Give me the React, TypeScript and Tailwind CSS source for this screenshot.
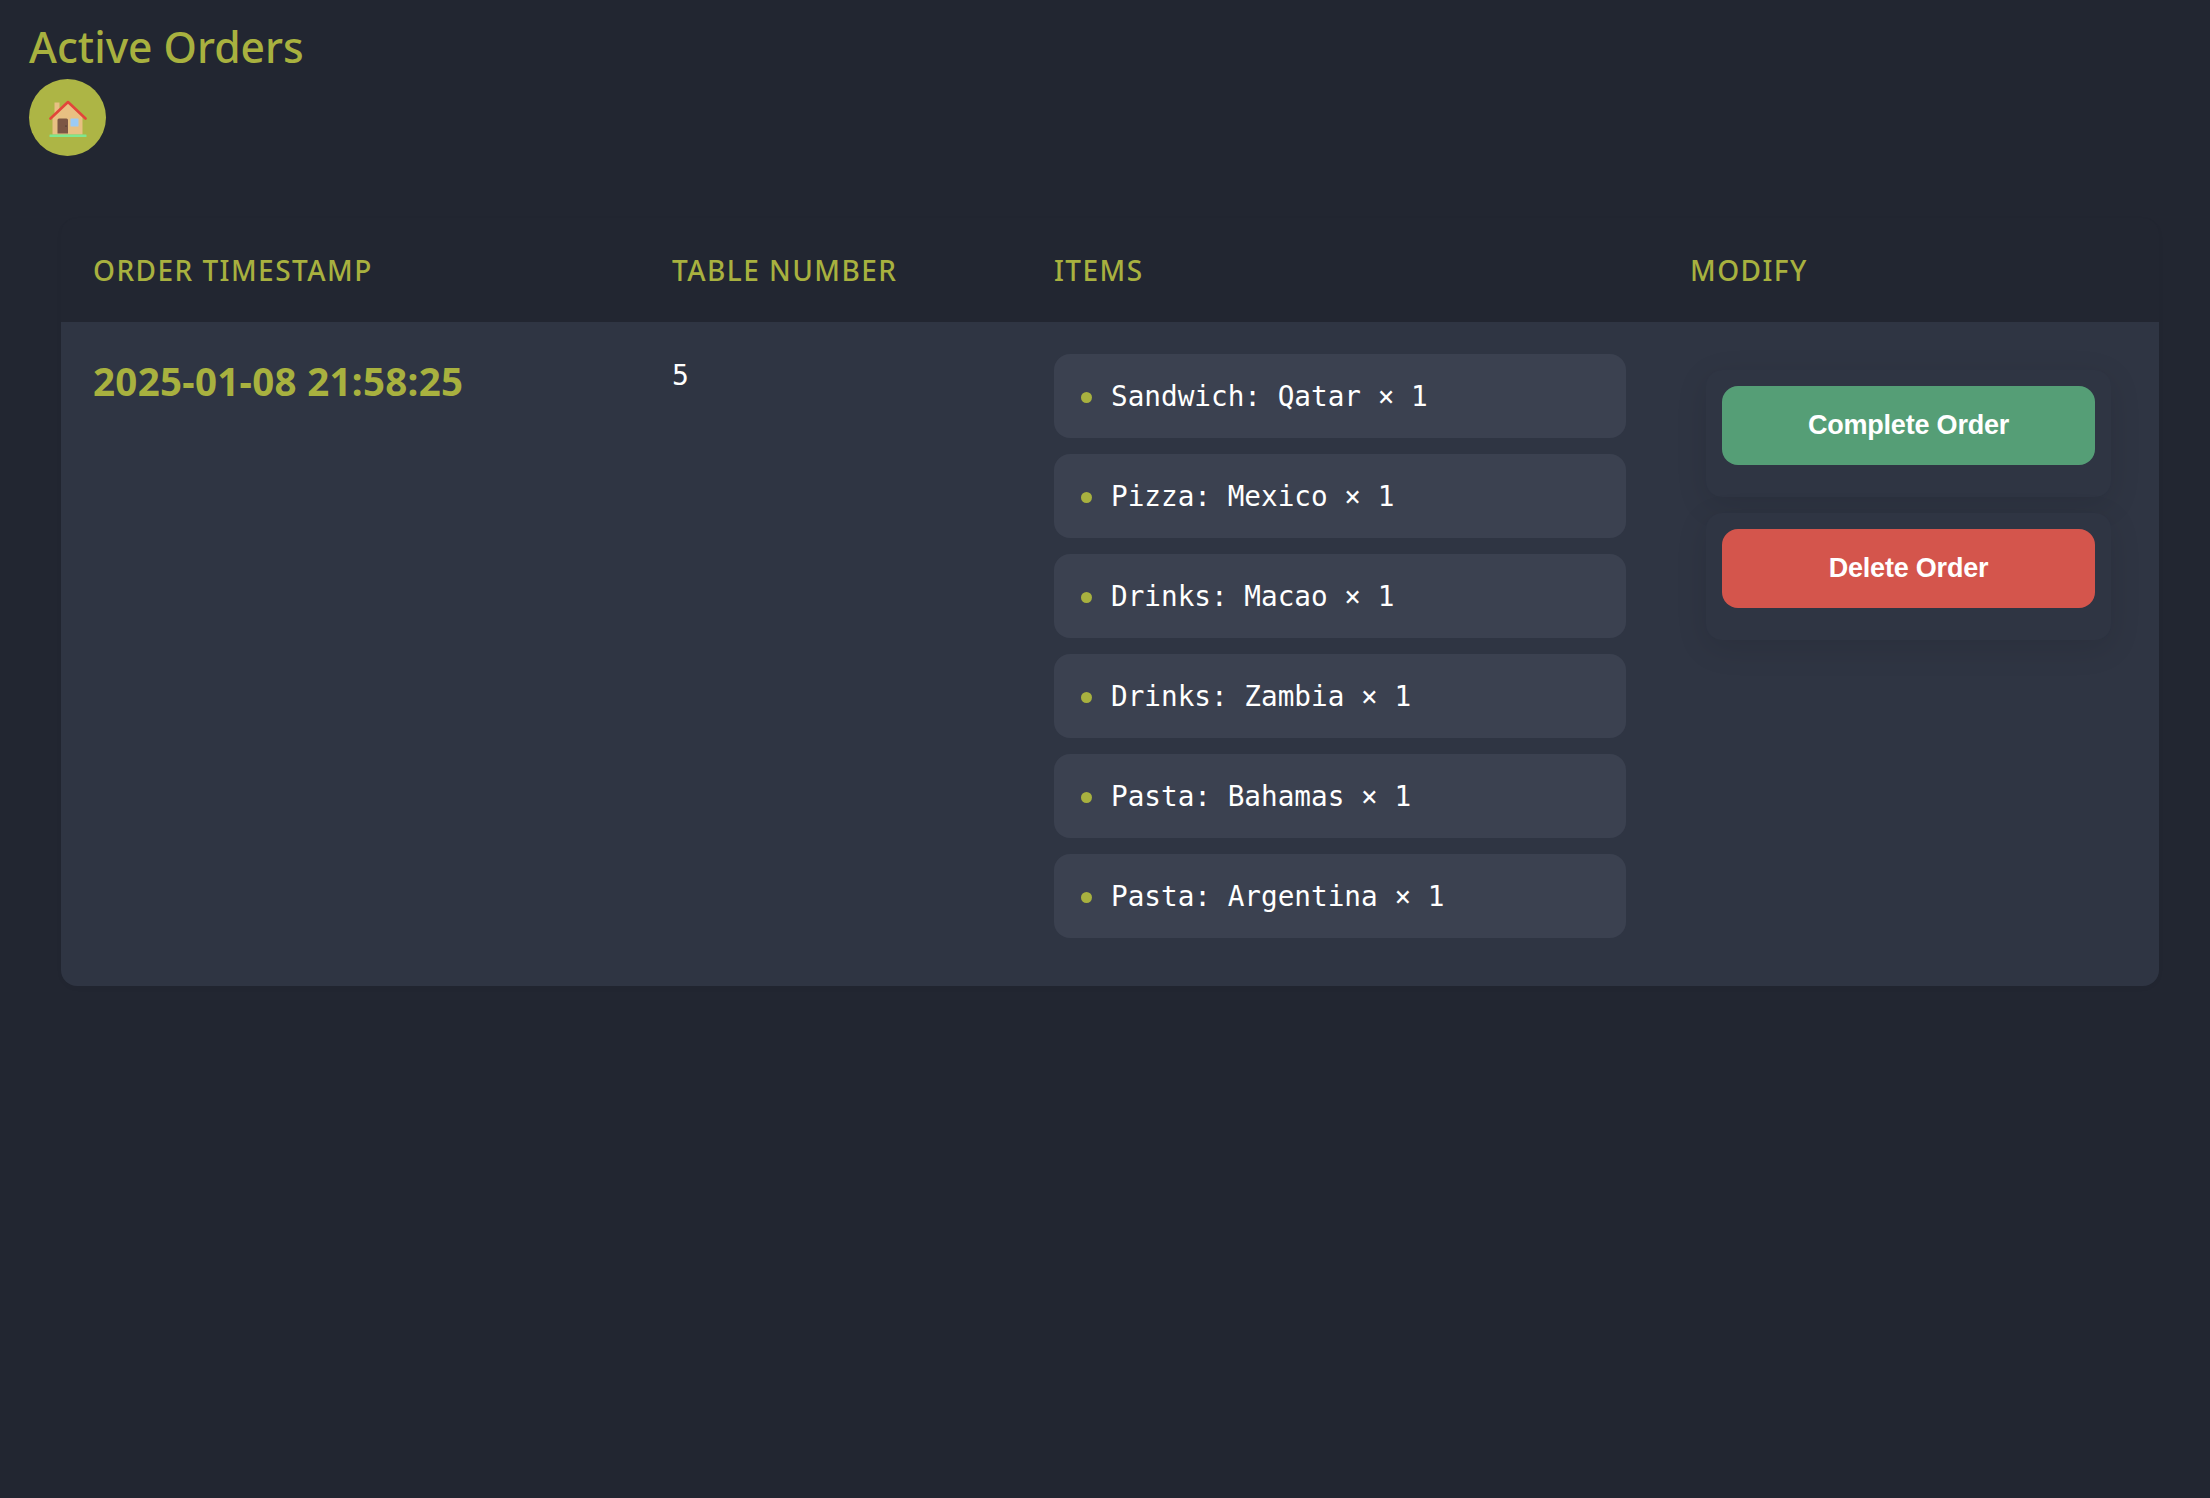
const items = ["Sandwich: Qatar × 1", "Pizza: Mexico × 1", "Drinks: Macao × 1", "Drinks: Zambia × 1", "Pasta: Bahamas × 1", "Pasta: Argentina × 1"];

function House() {
  return (
    <svg width="38" height="40" viewBox="0 0 38 40" aria-hidden="true">
      <rect x="5.5" y="4.5" width="5" height="14" fill="#e8c082" />
      <path d="M3.5 19 L19 4 L33.5 19 V36.5 H3.5 Z" fill="#e8c082" />
      <path d="M1.5 20.5 L19 4 L36.5 20.5" fill="none" stroke="#e2453a" strokeWidth="2.6" strokeLinecap="round" strokeLinejoin="round" />
      <path d="M8.5 22 Q8.5 20.5 10 20.5 H17.5 Q19 20.5 19 22 V35.5 H8.5 Z" fill="#7d5644" />
      <circle cx="17" cy="28" r="0.6" fill="#222" />
      <rect x="21.5" y="20.5" width="8" height="8" rx="0.5" fill="#9ccbf5" />
      <rect x="0.5" y="36.5" width="37" height="2.5" rx="0.5" fill="#7fe88f" />
    </svg>
  );
}

export default function App() {
  return (
    <div className="min-h-[1498px] bg-[#222631] font-['Noto_Sans',sans-serif]">
      <div className="px-[29px] pt-[16px]">
        <h1 className="text-[42.6px] leading-[60px] font-medium text-[#a8b13f]">Active Orders</h1>
        <a className="mt-[3px] flex h-[77px] w-[77px] items-center justify-center rounded-full bg-[#adb545]">
          <House />
        </a>
      </div>
      <div className="mx-[61px] mt-[62px] w-[2098px] rounded-2xl shadow-[0_2px_8px_rgba(0,0,0,0.02)]">
        <div className="grid h-[104px] grid-cols-[579px_382px_636px_501px] items-center rounded-t-2xl bg-[#222631] text-[28px] font-medium tracking-[1.45px] text-[#a8b13f]">
          <div className="pl-8">ORDER TIMESTAMP</div>
          <div className="pl-8">TABLE NUMBER</div>
          <div className="pl-8">ITEMS</div>
          <div className="pl-8">MODIFY</div>
        </div>
        <div className="grid h-[664px] grid-cols-[579px_382px_636px_501px] rounded-b-2xl bg-[#2f3543] pt-8">
          <div className="pt-[2px] pl-8 text-[38.5px] leading-[50px] font-bold tracking-[0.3px] text-[#a8b13f]">2025-01-08 21:58:25</div>
          <div className="pt-[1px] pl-8 font-['DejaVu_Sans_Mono',monospace] text-[28px] leading-[42px] text-white">5</div>
          <ul className="mx-8 flex flex-col gap-4">
            {items.map((t) => (
              <li key={t} className="flex h-[84px] items-center gap-[19px] rounded-2xl bg-[#3b4150] pl-[27px] font-['DejaVu_Sans_Mono',monospace] text-[27.7px] text-white">
                <span className="relative top-[1px] h-[11px] w-[11px] rounded-full bg-[#a8b13f]" />
                <span className="relative top-[1px]">{t}</span>
              </li>
            ))}
          </ul>
          <div className="mx-12 flex flex-col gap-4 pt-4">
            {[["Complete Order", "bg-[#559e76]"], ["Delete Order", "bg-[#d4554c]"]].map(([t, c]) => (
              <div key={t} className="h-[127px] rounded-2xl bg-[#2f3543] px-4 pt-4 shadow-[0_8px_32px_rgba(0,0,0,0.1)]">
                <button className={`h-[79px] w-full rounded-2xl font-['Liberation_Sans',sans-serif] text-[27px] font-bold tracking-[-0.2px] text-white ${c}`}>{t}</button>
              </div>
            ))}
          </div>
        </div>
      </div>
    </div>
  );
}
